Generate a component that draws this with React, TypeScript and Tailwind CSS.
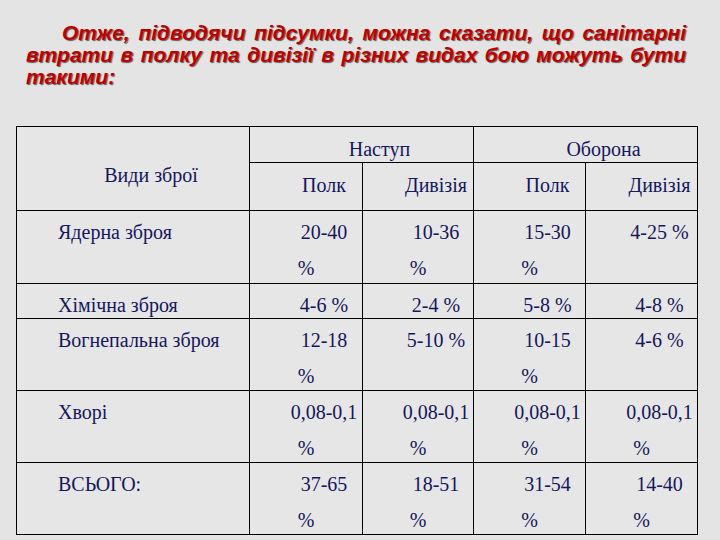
import React from 'react';

const serif = "font-['Liberation_Serif','Times_New_Roman',serif]";

type Cell = {
  lines: string[];
  className?: string;
};

const rows: { label: string; cells: string[][] }[] = [
  { label: 'Ядерна зброя', cells: [['20-40', '%'], ['10-36', '%'], ['15-30', '%'], ['4-25 %']] },
  { label: 'Хімічна зброя', cells: [['4-6 %'], ['2-4 %'], ['5-8 %'], ['4-8 %']] },
  { label: 'Вогнепальна зброя', cells: [['12-18', '%'], ['5-10 %'], ['10-15', '%'], ['4-6 %']] },
  { label: 'Хворі', cells: [['0,08-0,1', '%'], ['0,08-0,1', '%'], ['0,08-0,1', '%'], ['0,08-0,1', '%']] },
  { label: 'ВСЬОГО:', cells: [['37-65', '%'], ['18-51', '%'], ['31-54', '%'], ['14-40', '%']] },
];

const CenterCell = ({ lines, className = '' }: Cell) => (
  <div className={`bg-[#e6e6e6] text-center indent-[36px] leading-[36px] ${className}`}>
    {lines.map((l, i) => (
      <React.Fragment key={i}>
        {i > 0 && <br />}
        {l}
      </React.Fragment>
    ))}
  </div>
);

export default function App() {
  return (
    <div className="w-[720px] h-[540px] overflow-hidden bg-[#e4e4e4]">
      <div className="pt-[22px] pl-[26px] pr-[34px] font-['Liberation_Sans',Arial,sans-serif] font-bold italic text-[21px] leading-[22px] text-[#c00000] [text-shadow:1px_1px_1px_#5a5a5a]">
        <div className="pl-[36px] whitespace-nowrap text-justify [text-align-last:justify]">
          Отже, підводячи підсумки, можна сказати, що санітарні
        </div>
        <div className="whitespace-nowrap text-justify [text-align-last:justify]">
          втрати в полку та дивізії в різних видах бою можуть бути
        </div>
        <div>такими:</div>
      </div>

      <div
        className={`mt-[38px] ml-[16px] w-[682px] grid grid-cols-[232px_112px_110px_111px_111px] grid-rows-[35px_47px_72px_34px_71px_71px_71px] gap-px bg-black border border-black text-[20px] text-[#16165c] ${serif}`}
      >
        <CenterCell lines={['Види зброї']} className="row-span-2 pt-[30px]" />
        <CenterCell lines={['Наступ']} className="col-span-2 pt-[4px]" />
        <CenterCell lines={['Оборона']} className="col-span-2 pt-[4px]" />
        <CenterCell lines={['Полк']} className="pt-[4px]" />
        <CenterCell lines={['Дивізія']} className="pt-[4px]" />
        <CenterCell lines={['Полк']} className="pt-[4px]" />
        <CenterCell lines={['Дивізія']} className="pt-[4px]" />

        {rows.map((r) => (
          <React.Fragment key={r.label}>
            <div className="bg-[#e6e6e6] pl-[41px] pt-[3px] leading-[36px]">{r.label}</div>
            {r.cells.map((c, i) => (
              <CenterCell key={i} lines={c} className="pt-[3px]" />
            ))}
          </React.Fragment>
        ))}
      </div>
    </div>
  );
}
